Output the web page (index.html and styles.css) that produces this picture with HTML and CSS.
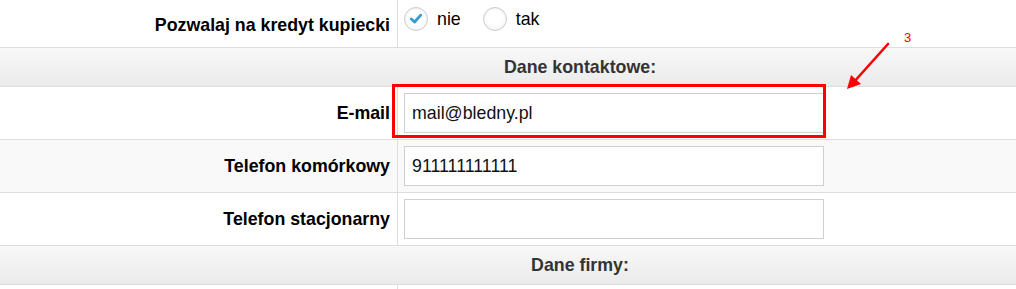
FILE: index.html
```html
<!DOCTYPE html>
<html lang="pl">
<head>
<meta charset="utf-8">
<title>Formularz klienta</title>
<link rel="stylesheet" href="styles.css">
</head>
<body>
<div class="page">
  <table class="form">
    <tr class="row row-first">
      <th class="label">Pozwalaj na kredyt kupiecki</th>
      <td class="field">
        <div class="radios">
          <span class="radio checked">
            <svg viewBox="0 0 23 23" width="23" height="23"><path d="M6.6 12 L10 15.2 L16.4 8" fill="none" stroke="#3a9ad4" stroke-width="3" stroke-linecap="round" stroke-linejoin="round"/></svg>
          </span>
          <span class="radio-text">nie</span>
          <span class="radio"></span>
          <span class="radio-text">tak</span>
        </div>
      </td>
    </tr>
    <tr class="section">
      <th colspan="2">Dane kontaktowe:</th>
    </tr>
    <tr class="row">
      <th class="label">E-mail</th>
      <td class="field"><input class="text" type="text" value="mail@bledny.pl"></td>
    </tr>
    <tr class="row row-alt">
      <th class="label">Telefon komórkowy</th>
      <td class="field"><input class="text" type="text" value="911111111111"></td>
    </tr>
    <tr class="row">
      <th class="label">Telefon stacjonarny</th>
      <td class="field"><input class="text" type="text" value=""></td>
    </tr>
    <tr class="section">
      <th colspan="2">Dane firmy:</th>
    </tr>
    <tr class="row">
      <th class="label"></th>
      <td class="field"></td>
    </tr>
  </table>

  <div class="mark-box"></div>
  <svg class="mark-arrow" viewBox="0 0 60 60" width="60" height="60">
    <line x1="47" y1="4" x2="12" y2="43" stroke="#f00" stroke-width="2.6" stroke-linecap="round"/>
    <polygon points="6,49 10,35 20,44" fill="#f00"/>
  </svg>
  <span class="mark-num">3</span>
</div>
</body>
</html>
```

FILE: styles.css
```css
html, body {
  margin: 0;
  padding: 0;
  background: #fff;
  overflow: hidden;
}

.page {
  position: relative;
  width: 1016px;
  height: 289px;
  overflow: hidden;
  font-family: "Liberation Sans", Arial, sans-serif;
  font-size: 17.8px;
  color: #000;
}

.form {
  width: 1160px;
  border-collapse: separate;
  border-spacing: 0;
}

.form th,
.form td {
  padding: 0;
  box-sizing: border-box;
}

.row > .label,
.row > .field {
  border-bottom: 1px solid #dddddd;
  height: 53px;
  vertical-align: middle;
}

.row > .label {
  width: 398px;
  border-right: 1px solid #dddddd;
  padding-right: 7px;
  text-align: right;
  font-weight: bold;
  white-space: nowrap;
}

.row > .field {
  padding: 6px 6px;
}

.row-alt > .label,
.row-alt > .field {
  background: #f9f9f9;
}

.row-first > .label,
.row-first > .field {
  height: 48px;
}

.row-first > .label {
  padding-top: 3px;
}

.row-first > .field {
  padding-top: 0;
  padding-bottom: 10px;
}

.section > th {
  height: 39px;
  border-bottom: 1px solid #dddddd;
  background: linear-gradient(#f8f8f8, #ebebeb);
  color: #333;
  font-weight: bold;
  text-align: center;
  vertical-align: middle;
  padding-top: 1px;
}

.text {
  display: block;
  box-sizing: border-box;
  width: 420px;
  height: 40px;
  margin: 0;
  padding: 0 7px;
  border: 1px solid #cfcfcf;
  border-radius: 0;
  background: #fff;
  font-family: "Liberation Sans", Arial, sans-serif;
  font-size: 17.8px;
  color: #111;
  outline: none;
}

.radios {
  display: flex;
  align-items: center;
}

.radio {
  box-sizing: border-box;
  width: 24px;
  height: 24px;
  border: 1px solid #cccccc;
  border-radius: 50%;
  background: radial-gradient(circle at 50% 40%, #ffffff 40%, #f1f1f1 100%);
  display: flex;
  align-items: center;
  justify-content: center;
  box-shadow: inset 0 1px 2px rgba(0,0,0,0.06);
}

.radio svg {
  display: block;
}

.radio-text {
  margin-left: 9px;
  margin-right: 22px;
  padding-top: 2px;
}

.mark-box {
  position: absolute;
  left: 392px;
  top: 84px;
  width: 434px;
  height: 54px;
  box-sizing: border-box;
  border: 3px solid #ff0000;
}

.mark-arrow {
  position: absolute;
  left: 841px;
  top: 40px;
}

.mark-num {
  position: absolute;
  left: 904px;
  top: 30px;
  font-family: "Liberation Sans", Arial, sans-serif;
  font-size: 13px;
  color: #f00;
}
```
